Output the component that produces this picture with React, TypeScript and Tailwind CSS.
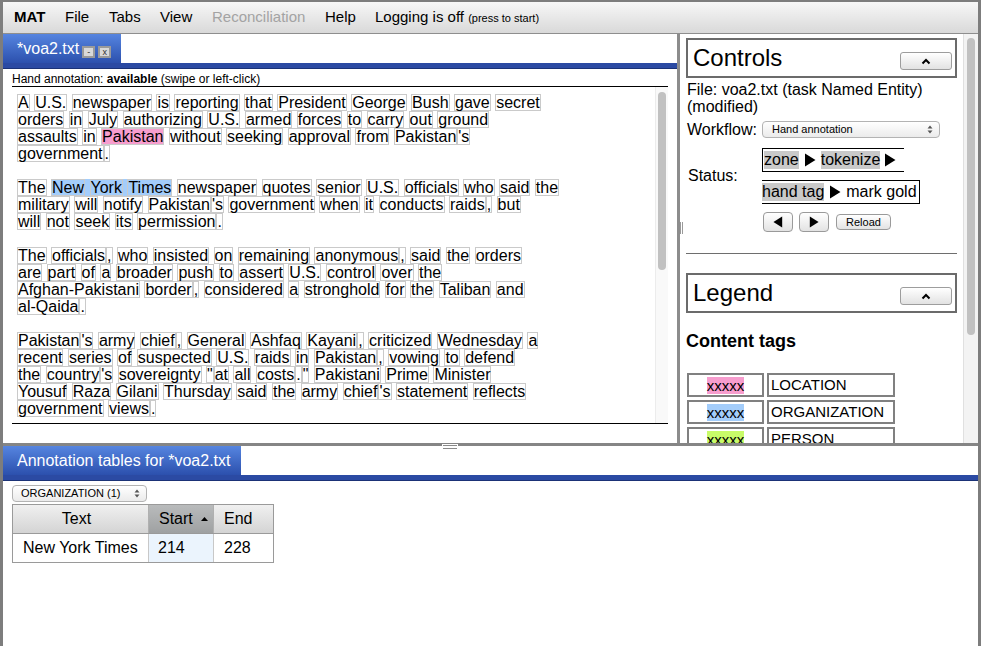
import React, { Fragment } from "react";

const P1 = [
  "A U.S. newspaper is reporting that President George Bush gave secret",
  "orders in July authorizing U.S. armed forces to carry out ground",
  "assaults in @pPakistan without seeking approval from Pakistan|'s",
  "government|.",
];
const P2 = [
  "The @bNew~York~Times newspaper quotes senior U.S. officials who said the",
  "military will notify Pakistan|'s government when it conducts raids|, but",
  "will not seek its permission|.",
];
const P3 = [
  "The officials|, who insisted on remaining anonymous|, said the orders",
  "are part of a broader push to assert U.S. control over the",
  "Afghan-Pakistani border|, considered a stronghold for the Taliban and",
  "al-Qaida|.",
];
const P4 = [
  "Pakistan|'s army chief|, General Ashfaq Kayani|, criticized Wednesday a",
  "recent series of suspected U.S. raids in Pakistan|, vowing to defend",
  `the country|'s sovereignty "|at all costs|.|" Pakistani Prime Minister`,
  "Yousuf Raza Gilani Thursday said the army chief|'s statement reflects",
  "government views|.",
];

function Tok({ t }: { t: string }) {
  return <span className="inline-block h-[17px] leading-[15px] border border-[#cacaca]">{t}</span>;
}

function Line({ s }: { s: string }) {
  const words = s.split(" ");
  return (
    <div className="h-[17px] whitespace-nowrap">
      {words.map((w, i) => {
        let bg = "";
        let body = w;
        if (w.startsWith("@p")) {
          bg = "bg-[#f79dce]";
          body = w.slice(2);
        } else if (w.startsWith("@b")) {
          bg = "bg-[#a3cdfb]";
          body = w.slice(2);
        }
        const inner = body.split("~").map((gw, j) => (
          <Fragment key={j}>
            {j > 0 && " "}
            {gw.split("|").map((t, k) => (
              <Tok key={k} t={t} />
            ))}
          </Fragment>
        ));
        return (
          <Fragment key={i}>
            {i > 0 && " "}
            {bg ? <span className={bg}>{inner}</span> : inner}
          </Fragment>
        );
      })}
    </div>
  );
}

function Para({ lines }: { lines: string[] }) {
  return (
    <>
      {lines.map((l, i) => (
        <Line key={i} s={l} />
      ))}
    </>
  );
}

function TriRight({ w = 12, h = 14 }: { w?: number; h?: number }) {
  return (
    <svg width={w} height={h} viewBox="0 0 12 14" className="shrink-0 block">
      <path d="M1 0.5 L11.5 7 L1 13.5 Z" fill="black" />
    </svg>
  );
}
function TriLeft({ w = 10, h = 12 }: { w?: number; h?: number }) {
  return (
    <svg width={w} height={h} viewBox="0 0 12 14" className="shrink-0 block">
      <path d="M11 0.5 L0.5 7 L11 13.5 Z" fill="black" />
    </svg>
  );
}

function Caret() {
  return (
    <svg width="10" height="7" viewBox="0 0 10 7" className="block">
      <path d="M1.5 5.5 L5 2 L8.5 5.5" fill="none" stroke="black" strokeWidth="2" />
    </svg>
  );
}

function SelArrows() {
  return (
    <svg width="6" height="9" viewBox="0 0 6 9" className="block shrink-0">
      <path d="M0.5 3.5 L3 0.5 L5.5 3.5 Z" fill="#555" />
      <path d="M0.5 5.5 L3 8.5 L5.5 5.5 Z" fill="#555" />
    </svg>
  );
}

function Box({ title }: { title: string }) {
  return (
    <div className="h-[40px] border-2 border-[#6b6b6b] flex items-center justify-between pl-[5px] pr-[3px]">
      <span className="text-[24px] leading-[28px]">{title}</span>
      <div className="mt-[6px] w-[52px] h-[18px] rounded-[3px] border border-[#9d9d9d] bg-gradient-to-b from-white to-[#e2e2e2] flex items-center justify-center">
        <Caret />
      </div>
    </div>
  );
}

function LegendRow({ bg, label }: { bg: string; label: string }) {
  return (
    <div className="flex gap-[3px] h-[24px]">
      <div className="w-[77px] border-2 border-[#808080] flex items-center justify-center">
        <span className={`${bg} text-[15px] leading-[17px]`}>xxxxx</span>
      </div>
      <div className="w-[128px] border-2 border-[#808080] flex items-center pl-[2px] text-[15px]">{label}</div>
    </div>
  );
}

export default function App() {
  return (
    <div className="w-[981px] h-[646px] overflow-hidden bg-white text-black font-['Liberation_Sans',Arial,sans-serif] border-x-[3px] border-t-[2px] border-[#7d7d7d] flex flex-col">
      {/* menu bar */}
      <div className="h-[32px] shrink-0 flex items-center pl-[11px] border-b border-[#8e8e8e] bg-gradient-to-b from-[#f7f7f7] to-[#d9d9d9] text-[15px]">
        <span className="w-[51px] shrink-0 font-bold">MAT</span>
        <span className="w-[44px] shrink-0">File</span>
        <span className="w-[51px] shrink-0">Tabs</span>
        <span className="w-[52px] shrink-0">View</span>
        <span className="w-[113px] shrink-0 text-[#a3a3a3]">Reconciliation</span>
        <span className="w-[50px] shrink-0">Help</span>
        <span className="whitespace-nowrap">
          Logging is off <span className="text-[11px]">(press to start)</span>
        </span>
      </div>

      {/* top area */}
      <div className="h-[409px] shrink-0 flex overflow-hidden">
        {/* left pane */}
        <div className="w-[674px] shrink-0 flex flex-col">
          <div className="h-[29px] flex shrink-0">
            <div className="w-[118px] h-full bg-gradient-to-b from-[#5685e0] to-[#2c50ad] flex items-center pl-[14px] text-white text-[16px]">
              <span>*voa2.txt</span>
              <div className="ml-[3px] mt-[7px] flex gap-[3px]">
                <span className="w-[13px] h-[12px] border-2 border-[#9a9a9a] bg-[#d9d9d9] text-[9px] leading-[8px] text-[#333] flex items-center justify-center">-</span>
                <span className="w-[13px] h-[12px] border-2 border-[#9a9a9a] bg-[#d9d9d9] text-[9px] leading-[8px] text-[#333] flex items-center justify-center">x</span>
              </div>
            </div>
          </div>
          <div className="h-[6px] shrink-0 bg-[#2b4aa3] border-b border-[#1b3276]" />
          <div className="mx-[9px] h-[18px] shrink-0 pt-[3px] border-b border-black text-[12px] leading-[14px] whitespace-nowrap">
            Hand annotation: <b>available</b> (swipe or left-click)
          </div>
          <div className="mx-[9px] h-[337px] shrink-0 border-b border-black flex">
            <div className="flex-1 pl-[5px] pt-[7px] text-[16px] leading-[17px] overflow-hidden">
              <Para lines={P1} />
              <div className="h-[17px]" />
              <Para lines={P2} />
              <div className="h-[17px]" />
              <Para lines={P3} />
              <div className="h-[17px]" />
              <Para lines={P4} />
            </div>
            <div className="w-[13px] shrink-0 bg-[#f9f9f9] border-l border-[#ececec] pt-[5px] pl-[2px]">
              <div className="w-[8px] h-[178px] rounded-full bg-[#c1c1c1]" />
            </div>
          </div>
        </div>

        {/* vertical splitter */}
        <div className="w-[3px] shrink-0 bg-[#8c8c8c]" />

        {/* right pane */}
        <div className="flex-1 flex relative">
          <div className="absolute left-0 top-[188px] w-[3px] h-[12px] border-x border-[#9a9a9a]" />
          <div className="flex-1 overflow-hidden px-[6px] pt-[4px]">
            <Box title="Controls" />
            <div className="mt-[3px] pl-[1px] text-[16px] leading-[17px]">
              File: voa2.txt (task Named Entity)
              <br />
              (modified)
            </div>
            <div className="mt-[6px] h-[17px] flex items-center pl-[1px] text-[16px]">
              <span className="w-[75px] shrink-0">Workflow:</span>
              <div className="w-[178px] shrink-0 h-[17px] rounded-[4px] border border-[#b3b3b3] bg-gradient-to-b from-white to-[#ebebeb] flex items-center justify-between pl-[9px] pr-[6px] text-[11px]">
                <span>Hand annotation</span>
                <SelArrows />
              </div>
            </div>
            <div className="mt-[10px] flex pl-[2px] text-[16px]">
              <span className="w-[74px] shrink-0 self-center">Status:</span>
              <div className="flex flex-col gap-[8px]">
                <div className="h-[24px] w-[142px] border-l border-y border-black flex items-center pl-[1px] whitespace-nowrap">
                  <span className="bg-[#c9c9c9] leading-[18px]">zone</span>
                  <span className="mx-[5px]">
                    <TriRight />
                  </span>
                  <span className="bg-[#c9c9c9] leading-[18px]">tokenize</span>
                  <span className="ml-[4px]">
                    <TriRight />
                  </span>
                </div>
                <div className="h-[24px] w-[158px] border-r border-y border-black flex items-center whitespace-nowrap">
                  <span className="bg-[#c9c9c9] leading-[18px]">hand tag</span>
                  <span className="mx-[5px]">
                    <TriRight />
                  </span>
                  <span className="leading-[18px]">mark gold</span>
                </div>
              </div>
            </div>
            <div className="mt-[8px] flex items-center pl-[77px]">
              <div className="w-[30px] h-[20px] shrink-0 rounded-[4px] border border-[#9a9a9a] bg-gradient-to-b from-white to-[#e3e3e3] flex items-center justify-center">
                <TriLeft />
              </div>
              <div className="ml-[6px] w-[30px] h-[20px] shrink-0 rounded-[4px] border border-[#9a9a9a] bg-gradient-to-b from-white to-[#e3e3e3] flex items-center justify-center">
                <TriRight w={10} h={12} />
              </div>
              <div className="ml-[7px] w-[55px] h-[16px] shrink-0 rounded-[4px] border border-[#9a9a9a] bg-gradient-to-b from-white to-[#e3e3e3] flex items-center justify-center text-[11px]">
                Reload
              </div>
            </div>
            <div className="mt-[21px] h-px bg-[#6e6e6e]" />
            <div className="mt-[19px]">
              <Box title="Legend" />
            </div>
            <div className="mt-[18px] text-[18px] font-bold leading-[21px]">Content tags</div>
            <div className="mt-[21px] pl-[1px] flex flex-col gap-[3px]">
              <LegendRow bg="bg-[#f79dce]" label="LOCATION" />
              <LegendRow bg="bg-[#a3cdfb]" label="ORGANIZATION" />
              <LegendRow bg="bg-[#c8fb69]" label="PERSON" />
            </div>
          </div>
          <div className="w-[15px] shrink-0 bg-[#f3f3f3] border-l border-[#e0e0e0] pt-[4px] pl-[3px]">
            <div className="w-[8px] h-[297px] rounded-full bg-[#c1c1c1]" />
          </div>
        </div>
      </div>

      {/* horizontal splitter */}
      <div className="h-[3px] shrink-0 bg-[#858585] relative">
        <div className="absolute left-[439px] top-[1px] w-[16px] h-[6px] bg-white flex flex-col justify-center gap-[2px] px-[1px]">
          <div className="h-px bg-[#8a8a8a]" />
          <div className="h-px bg-[#8a8a8a]" />
        </div>
      </div>

      {/* bottom pane */}
      <div className="flex-1 flex flex-col">
        <div className="h-[29px] shrink-0 flex">
          <div className="w-[238px] h-full bg-gradient-to-b from-[#5685e0] to-[#2c50ad] flex items-center pl-[14px] text-white text-[16px] whitespace-nowrap">
            Annotation tables for *voa2.txt
          </div>
        </div>
        <div className="h-[6px] shrink-0 bg-[#2b4aa3] border-b border-[#1b3276]" />
        <div className="mt-[4px] ml-[9px] w-[135px] h-[17px] shrink-0 rounded-[4px] border border-[#b3b3b3] bg-gradient-to-b from-white to-[#ebebeb] flex items-center justify-between pl-[8px] pr-[6px] text-[11px]">
          <span>ORGANIZATION (1)</span>
          <SelArrows />
        </div>
        <div className="mt-[2px] ml-[9px] w-[262px] shrink-0 border border-[#9a9a9a] text-[16px]">
          <div className="h-[29px] flex border-b border-[#9a9a9a]">
            <div className="w-[136px] border-r border-[#b0b0b0] bg-gradient-to-b from-[#f0f0f0] to-[#d4d4d4] flex items-center justify-center pr-[8px]">
              Text
            </div>
            <div className="w-[65px] border-r border-[#b0b0b0] bg-gradient-to-b from-[#b9bbbc] to-[#9fa1a2] flex items-center pl-[10px]">
              Start
              <svg width="7" height="4" viewBox="0 0 7 4" className="ml-[8px] block">
                <path d="M0 4 L3.5 0 L7 4 Z" fill="black" />
              </svg>
            </div>
            <div className="flex-1 bg-gradient-to-b from-[#f0f0f0] to-[#d4d4d4] flex items-center pl-[10px]">End</div>
          </div>
          <div className="h-[28px] flex">
            <div className="w-[136px] border-r border-[#c8c8c8] flex items-center pl-[10px]">New York Times</div>
            <div className="w-[65px] border-r border-[#c8c8c8] bg-[#ebf4fd] flex items-center pl-[9px]">214</div>
            <div className="flex-1 flex items-center pl-[10px]">228</div>
          </div>
        </div>
      </div>
    </div>
  );
}
